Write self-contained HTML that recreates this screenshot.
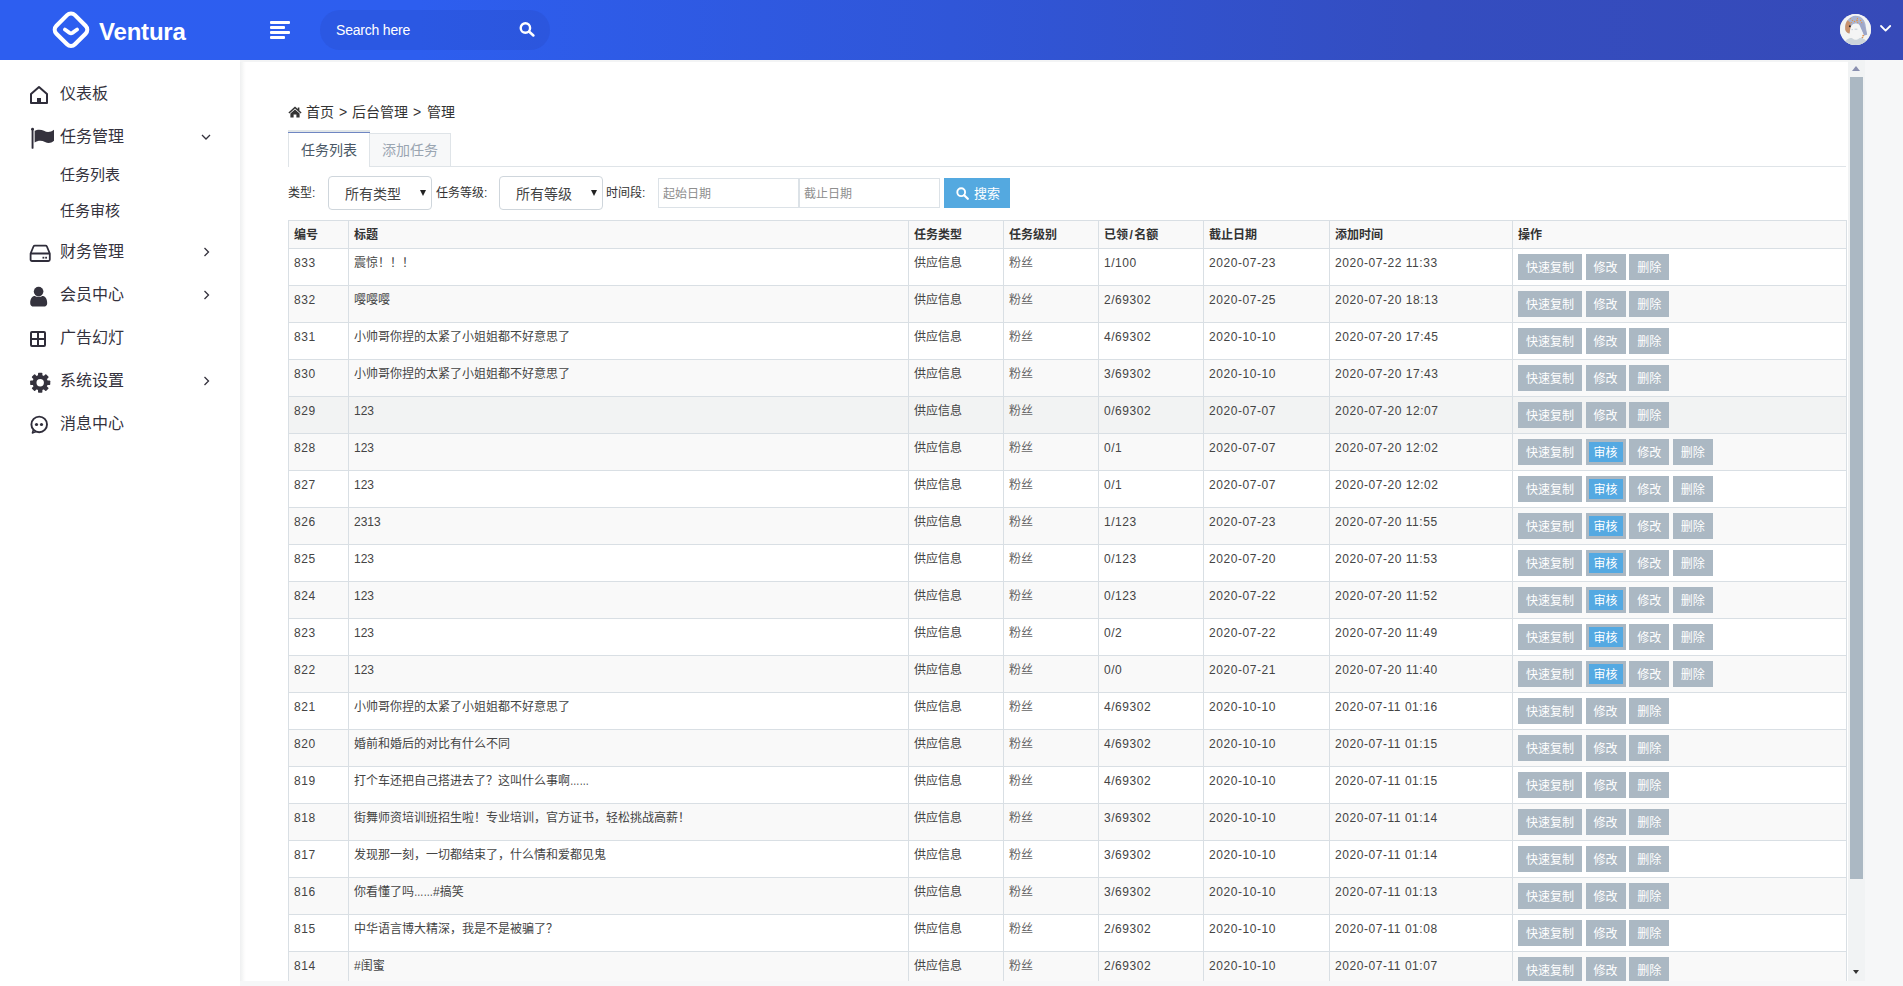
<!DOCTYPE html>
<html lang="zh-CN">
<head>
<meta charset="utf-8">
<title>Ventura</title>
<style>
*{box-sizing:border-box}
html,body{margin:0;padding:0}
body{width:1903px;height:986px;overflow:hidden;position:relative;background:#f6f7f8;
 font-family:"Liberation Sans","Noto Sans CJK SC",sans-serif;color:#333;}
a{text-decoration:none;color:inherit}
/* header */
#hd{position:absolute;left:0;top:0;width:1903px;height:60px;
 background:linear-gradient(90deg,#2d5ef0 0%,#2d5eef 22%,#3056d8 50%,#344dc0 75%,#364ab8 100%);}
#logo{position:absolute;left:50px;top:9px;width:42px;height:42px}
#brand{position:absolute;left:99px;top:17px;font-size:24px;font-weight:bold;color:#fff;line-height:30px;letter-spacing:-0.2px}
#burger{position:absolute;left:270px;top:21px;width:20px;height:18px}
#burger i{position:absolute;left:0;height:3px;background:#fff;border-radius:1px}
#search{position:absolute;left:320px;top:10px;width:230px;height:40px;border-radius:20px;background:rgba(40,60,170,.18)}
#search span{position:absolute;left:16px;top:11px;font-size:14px;line-height:18px;color:#fff;letter-spacing:-.2px}
#search svg{position:absolute;left:199px;top:12px}
#avatar{position:absolute;left:1840px;top:14px;width:31px;height:31px;border-radius:50%;overflow:hidden;background:#e6e8ea}
#uchev{position:absolute;left:1879px;top:24px}
/* sidebar */
#sb{position:absolute;left:0;top:60px;width:240px;height:926px;background:#fff}
.mi{position:absolute;left:0;width:240px;height:43px}
.mi .ic{position:absolute;left:28px;top:9px;width:28px;height:26px}
.mi .tx{position:absolute;left:60px;top:10px;font-size:16px;line-height:22px;color:#34323d}
.mi .ch{position:absolute;left:199px;top:14px;width:14px;height:14px}
.si{position:absolute;left:60px;font-size:15px;line-height:20px;color:#34323d}
/* frame */
#fr{position:absolute;left:240px;top:60px;width:1625px;height:921px;
 background:linear-gradient(90deg,#eff0f1 0,#f4f5f5 2px,#fbfbfb 4px,#fff 6px) #fff;border-top:2px solid #f3f4f5}
#sbar{position:absolute;left:1848px;top:60px;width:17px;height:921px;background:#f1f3f4}
#sbar .th{position:absolute;left:2px;top:17px;width:13px;height:802px;background:#abb8c3}
#sbar .up{position:absolute;left:4px;top:6px;width:0;height:0;border-left:4.5px solid transparent;border-right:4.5px solid transparent;border-bottom:5px solid #8a90b0}
#sbar .dn{position:absolute;left:5px;top:910px;width:0;height:0;border-left:3.5px solid transparent;border-right:3.5px solid transparent;border-top:4px solid #333}
/* content */
#bc{position:absolute;left:288px;top:101px;font-size:14px;line-height:22px;color:#333;white-space:nowrap}
#bc svg{position:absolute;left:0;top:5px}
#bc span{position:absolute;top:0}
#tabs{position:absolute;left:288px;top:130px;width:1558px;height:37px;border-bottom:1px solid #dfe4e8}
#t1{position:absolute;left:0;top:0;width:82px;height:37px;background:#fff;border-left:1px solid #dfe4e8;border-right:1px solid #dfe4e8;border-top:2px solid #e1e6e8;font-size:14px;color:#4a5866;text-align:center;line-height:36px}
#t1:before{content:"";position:absolute;left:-1px;right:-1px;top:0;height:1px;background:#6f86c2}
#t2{position:absolute;left:81px;top:3px;width:82px;height:34px;background:#f7f8f9;border:1px solid #dfe4e8;font-size:14px;color:#9aa5b1;text-align:center;line-height:32px}
.lb{position:absolute;top:184px;font-size:12px;line-height:18px;color:#333;white-space:nowrap}
.sel{position:absolute;top:176px;width:104px;height:34px;border:1px solid #cfd6dc;border-radius:4px;background:#fff;font-size:14px;line-height:34px;color:#444}
.sel span{position:absolute;left:16px;top:0}
.sel i{position:absolute;left:90.5px;top:13px;width:0;height:0;border-left:3px solid transparent;border-right:3px solid transparent;border-top:6px solid #222}
.inp{position:absolute;top:178px;height:30px;border:1px solid #dce2e7;background:#fff;font-size:12px;line-height:30px;color:#8e8e8e;padding-left:4px}
#sbtn{position:absolute;left:944px;top:178px;width:66px;height:30px;background:#54a9e0;color:#fff;font-size:12px;line-height:30px}
#sbtn svg{position:absolute;left:12px;top:9px}
#sbtn span{position:absolute;left:30px;top:1px;font-size:13px}
table{position:absolute;left:288px;top:220px;width:1558px;border-collapse:collapse;table-layout:fixed;font-size:12px;line-height:17px;color:#444}
th,td{border:1px solid #d9dfe4;padding:6px 5px 4px 5px;text-align:left;vertical-align:top;white-space:nowrap;overflow:hidden}
th{font-weight:bold;color:#333;background:#f9f9f9;height:28px}
td{height:37px}
tr.alt td{background:#f9f9f9}
tr.hov td{background:#f2f3f3}
td.n{letter-spacing:.55px}
td.lv{color:#666}
.ell{display:inline-block;width:19px;transform:scaleX(.79);transform-origin:0 50%;white-space:nowrap;vertical-align:top}
td.ops{padding:5px 0 0 5px}
.btn{display:inline-block;height:26px;line-height:28px;padding:0 8px;margin-right:3.6px;background:#abb8c3;color:#fff;font-size:12px;vertical-align:top}
.btn.audit{padding:0;width:40px}
.btn.audit span{display:block;margin:3px;height:20px;line-height:22px;background:#54a9e2;text-align:center}
</style>
</head>
<body>
<div id="hd">
 <svg id="logo" viewBox="0 0 42 42"><rect x="7.9" y="7.6" width="26.2" height="26.2" rx="5.6" transform="rotate(45 21 20.7)" fill="none" stroke="#fff" stroke-width="4.2"/><path d="M14.9 20.5 L19.6 23.9 Q21 24.8 22.4 23.9 L27.1 20.5" fill="none" stroke="#fff" stroke-width="3.8" stroke-linecap="round" stroke-linejoin="round"/></svg>
 <div id="brand">Ventura</div>
 <div id="burger"><i style="top:0;width:20px"></i><i style="top:5px;width:15px"></i><i style="top:10px;width:20px"></i><i style="top:15px;width:15px"></i></div>
 <div id="search"><span>Search here</span>
  <svg width="17" height="16" viewBox="0 0 17 16"><circle cx="6.4" cy="6" r="4.7" fill="none" stroke="#fff" stroke-width="2.4"/><path d="M10 9.6 L14.4 13.4" stroke="#fff" stroke-width="2.6" stroke-linecap="round"/></svg></div>
 <div id="avatar"><svg width="31" height="31" viewBox="0 0 31 31"><rect width="31" height="31" fill="#f3f4f4"/><path d="M5.4 15 C4.6 8 9.5 2 15.5 1.8 C21 1.8 24 5 25.4 10 L27 20.4 L24.4 21.4 L21.4 14 C20.4 10.4 18 9.2 15.6 9.4 C12.4 9.6 10.6 12 10.2 15 L9.6 19.6 C7 19 5.8 17.4 5.4 15Z" fill="#a9b4d0"/><path d="M19 9.4 L23.4 8 L27.2 20.4 L24.2 21.6 L20.6 13.6Z" fill="#9ea7c8"/><path d="M5.2 15.4 C4.8 11 6 7.6 7.6 6.2 L10.6 8.8 L10.8 12.8 L9.4 19.4 C7 18.8 5.6 17.4 5.2 15.4Z" fill="#cf8a55" opacity=".8"/><circle cx="9.9" cy="12.3" r="1" fill="#2a2630"/><g fill="#e0944f"><circle cx="10.5" cy="4.6" r=".7"/><circle cx="12.5" cy="6.4" r=".7"/><circle cx="11.5" cy="8.6" r=".7"/><circle cx="14.5" cy="7.5" r=".7"/><circle cx="17" cy="6.4" r=".9"/><circle cx="17.5" cy="4.4" r=".6"/><circle cx="17.6" cy="8.6" r=".7"/><circle cx="20.6" cy="6.5" r=".7"/><circle cx="21.6" cy="8.6" r=".7"/><circle cx="23.2" cy="21.6" r=".9"/><circle cx="22.6" cy="23.4" r=".7"/></g><circle cx="21.6" cy="24.4" r=".7" fill="#2a2630"/><ellipse cx="15.4" cy="17.4" rx="5.2" ry="7.6" fill="#f4f5f5"/><path d="M14.6 15.2 H17.4" stroke="#b9c3d0" stroke-width=".9"/><path d="M11.4 15.6 H13" stroke="#b9c3d0" stroke-width=".7"/><path d="M4 31 C5 25.4 9 23.6 12 24 C14 26.4 17.6 26.4 19.6 24 C23 23.6 26.6 25.4 27.6 31Z" fill="#ccd5db"/></svg></div>
 <svg id="uchev" width="14" height="10" viewBox="0 0 14 10"><path d="M2 2 L6.6 6.6 L11.2 2" fill="none" stroke="#fff" stroke-width="1.8" stroke-linecap="round" stroke-linejoin="round"/></svg>
</div>

<div id="sb">
 <div class="mi" style="top:13px"><svg class="ic" viewBox="0 0 28 26"><path d="M3 12 L11 5.1 L19 12 V21 H3 Z" fill="none" stroke="#2f2d3a" stroke-width="2" stroke-linejoin="round"/><rect x="9" y="16" width="4" height="5" fill="#2f2d3a"/></svg><span class="tx">仪表板</span></div>
 <div class="mi" style="top:56px"><svg class="ic" viewBox="0 0 28 26"><rect x="3.6" y="3.4" width="1.9" height="20.4" rx=".9" fill="#2f2d3a"/><circle cx="4.55" cy="4.2" r="1.4" fill="#2f2d3a"/><path d="M6.65 5.8 C9 4.4 13 4.2 16 5.8 C19 7.6 22.5 7.4 26 4.8 V15.8 C23 18.4 20 18.6 17 17 C13.5 15.2 9.5 15.6 6.65 17.6 Z" fill="#34323d"/></svg><span class="tx">任务管理</span><svg class="ch" viewBox="0 0 14 14"><path d="M3 5 L7 9 L11 5" fill="none" stroke="#34323d" stroke-width="1.3"/></svg></div>
 <a class="si" style="top:105px">任务列表</a>
 <a class="si" style="top:141px">任务审核</a>
 <div class="mi" style="top:171px"><svg class="ic" viewBox="0 0 28 26"><path d="M2.6 13.5 L5.5 6.5 Q5.9 5.6 6.9 5.6 H17.5 Q18.5 5.6 18.9 6.5 L21.8 13.5 V19.6 Q21.8 21 20.4 21 H4 Q2.6 21 2.6 19.6 Z M2.6 13.5 H21.8" fill="none" stroke="#2f2d3a" stroke-width="1.8" stroke-linejoin="round"/><rect x="14.5" y="16.8" width="1.8" height="1.8" fill="#2f2d3a"/><rect x="17.2" y="16.8" width="1.8" height="1.8" fill="#2f2d3a"/></svg><span class="tx">财务管理</span><svg class="ch" viewBox="0 0 14 14"><path d="M5.5 3 L9.5 7 L5.5 11" fill="none" stroke="#34323d" stroke-width="1.3"/></svg></div>
 <div class="mi" style="top:214px"><svg class="ic" style="top:10px" viewBox="0 0 28 26"><circle cx="10.6" cy="7.6" r="4.8" fill="#34323d"/><path d="M2.2 19.2 C2.2 13.8 5 12 7 12 C8.6 13.2 12.6 13.2 14.2 12 C16.4 12 19.2 13.8 19.2 19.2 C19.2 21.6 17.6 22.6 15.8 22.6 H5.6 C3.8 22.6 2.2 21.6 2.2 19.2Z" fill="#34323d"/></svg><span class="tx">会员中心</span><svg class="ch" viewBox="0 0 14 14"><path d="M5.5 3 L9.5 7 L5.5 11" fill="none" stroke="#34323d" stroke-width="1.3"/></svg></div>
 <div class="mi" style="top:257px"><svg class="ic" style="top:8px" viewBox="0 0 28 26"><rect x="3" y="7" width="14" height="14" rx="1" fill="none" stroke="#2f2d3a" stroke-width="2"/><path d="M10 7 V21 M3 14 H17" stroke="#2f2d3a" stroke-width="2"/></svg><span class="tx">广告幻灯</span></div>
 <div class="mi" style="top:300px"><svg class="ic" style="top:8.5px" viewBox="0 0 28 26"><g transform="translate(12.2 13.7) scale(.95)" fill="#34323d"><path fill-rule="evenodd" d="M0 -8 A8 8 0 1 0 0 8 A8 8 0 1 0 0 -8 Z M0 -3.9 A3.9 3.9 0 1 1 0 3.9 A3.9 3.9 0 1 1 0 -3.9Z"/><g id="tt"><rect x="-2.3" y="-10.6" width="4.6" height="4" rx=".8"/></g><use href="#tt" transform="rotate(45)"/><use href="#tt" transform="rotate(90)"/><use href="#tt" transform="rotate(135)"/><use href="#tt" transform="rotate(180)"/><use href="#tt" transform="rotate(225)"/><use href="#tt" transform="rotate(270)"/><use href="#tt" transform="rotate(315)"/></g></svg><span class="tx">系统设置</span><svg class="ch" viewBox="0 0 14 14"><path d="M5.5 3 L9.5 7 L5.5 11" fill="none" stroke="#34323d" stroke-width="1.3"/></svg></div>
 <div class="mi" style="top:343px"><svg class="ic" style="top:8.5px" viewBox="0 0 28 26"><circle cx="11.2" cy="12.4" r="7.8" fill="none" stroke="#2f2d3a" stroke-width="1.9"/><path d="M5.4 17.6 L4.4 21 L8 19.6" fill="none" stroke="#2f2d3a" stroke-width="1.5" stroke-linejoin="round"/><circle cx="8.5" cy="12.5" r="1.6" fill="#2f2d3a"/><circle cx="13.5" cy="12.5" r="1.6" fill="#2f2d3a"/></svg><span class="tx">消息中心</span></div>
</div>

<div id="fr"></div>
<div id="bc"><svg width="14" height="12" viewBox="0 0 14 12"><path d="M7 0.6 L0.4 6.4 L1.4 7.4 L7 2.6 L12.6 7.4 L13.6 6.4 L11.4 4.4 V1.4 H9.8 V3 Z" fill="#333"/><path d="M2.4 7.4 L7 3.6 L11.6 7.4 V11.6 H8.4 V8.4 H5.6 V11.6 H2.4 Z" fill="#333"/></svg><span style="left:18px">首页</span><span style="left:51px">&gt;</span><span style="left:64px">后台管理</span><span style="left:125px">&gt;</span><span style="left:139px">管理</span></div>
<div id="tabs"><a id="t1">任务列表</a><a id="t2">添加任务</a></div>
<span class="lb" style="left:288px">类型:</span>
<div class="sel" style="left:328px"><span>所有类型</span><i></i></div>
<span class="lb" style="left:436px">任务等级:</span>
<div class="sel" style="left:499px"><span>所有等级</span><i></i></div>
<span class="lb" style="left:606px">时间段:</span>
<div class="inp" style="left:658px;width:141px">起始日期</div>
<div class="inp" style="left:799px;width:141px">截止日期</div>
<a id="sbtn"><svg width="13" height="13" viewBox="0 0 13 13"><circle cx="5.2" cy="5.2" r="3.9" fill="none" stroke="#fff" stroke-width="1.9"/><path d="M8.2 8.2 L11.8 11.8" stroke="#fff" stroke-width="2.2" stroke-linecap="round"/></svg><span>搜索</span></a>
<table>
<colgroup><col style="width:60px"><col style="width:560px"><col style="width:95px"><col style="width:95px"><col style="width:105px"><col style="width:126px"><col style="width:183px"><col style="width:334px"></colgroup>
<thead><tr><th>编号</th><th>标题</th><th>任务类型</th><th>任务级别</th><th>已领<span style="margin:0 1.5px">/</span>名额</th><th>截止日期</th><th>添加时间</th><th>操作</th></tr></thead>
<tbody>
<tr class=""><td class="n">833</td><td>震惊！！！</td><td>供应信息</td><td class="lv">粉丝</td><td class="n">1/100</td><td class="n">2020-07-23</td><td class="n">2020-07-22 11:33</td><td class="ops"><a class="btn">快速复制</a><a class="btn">修改</a><a class="btn">删除</a></td></tr>
<tr class="alt"><td class="n">832</td><td>嘤嘤嘤</td><td>供应信息</td><td class="lv">粉丝</td><td class="n">2/69302</td><td class="n">2020-07-25</td><td class="n">2020-07-20 18:13</td><td class="ops"><a class="btn">快速复制</a><a class="btn">修改</a><a class="btn">删除</a></td></tr>
<tr class=""><td class="n">831</td><td>小帅哥你捏的太紧了小姐姐都不好意思了</td><td>供应信息</td><td class="lv">粉丝</td><td class="n">4/69302</td><td class="n">2020-10-10</td><td class="n">2020-07-20 17:45</td><td class="ops"><a class="btn">快速复制</a><a class="btn">修改</a><a class="btn">删除</a></td></tr>
<tr class="alt"><td class="n">830</td><td>小帅哥你捏的太紧了小姐姐都不好意思了</td><td>供应信息</td><td class="lv">粉丝</td><td class="n">3/69302</td><td class="n">2020-10-10</td><td class="n">2020-07-20 17:43</td><td class="ops"><a class="btn">快速复制</a><a class="btn">修改</a><a class="btn">删除</a></td></tr>
<tr class="hov"><td class="n">829</td><td>123</td><td>供应信息</td><td class="lv">粉丝</td><td class="n">0/69302</td><td class="n">2020-07-07</td><td class="n">2020-07-20 12:07</td><td class="ops"><a class="btn">快速复制</a><a class="btn">修改</a><a class="btn">删除</a></td></tr>
<tr class="alt"><td class="n">828</td><td>123</td><td>供应信息</td><td class="lv">粉丝</td><td class="n">0/1</td><td class="n">2020-07-07</td><td class="n">2020-07-20 12:02</td><td class="ops"><a class="btn">快速复制</a><a class="btn audit"><span>审核</span></a><a class="btn">修改</a><a class="btn">删除</a></td></tr>
<tr class=""><td class="n">827</td><td>123</td><td>供应信息</td><td class="lv">粉丝</td><td class="n">0/1</td><td class="n">2020-07-07</td><td class="n">2020-07-20 12:02</td><td class="ops"><a class="btn">快速复制</a><a class="btn audit"><span>审核</span></a><a class="btn">修改</a><a class="btn">删除</a></td></tr>
<tr class="alt"><td class="n">826</td><td>2313</td><td>供应信息</td><td class="lv">粉丝</td><td class="n">1/123</td><td class="n">2020-07-23</td><td class="n">2020-07-20 11:55</td><td class="ops"><a class="btn">快速复制</a><a class="btn audit"><span>审核</span></a><a class="btn">修改</a><a class="btn">删除</a></td></tr>
<tr class=""><td class="n">825</td><td>123</td><td>供应信息</td><td class="lv">粉丝</td><td class="n">0/123</td><td class="n">2020-07-20</td><td class="n">2020-07-20 11:53</td><td class="ops"><a class="btn">快速复制</a><a class="btn audit"><span>审核</span></a><a class="btn">修改</a><a class="btn">删除</a></td></tr>
<tr class="alt"><td class="n">824</td><td>123</td><td>供应信息</td><td class="lv">粉丝</td><td class="n">0/123</td><td class="n">2020-07-22</td><td class="n">2020-07-20 11:52</td><td class="ops"><a class="btn">快速复制</a><a class="btn audit"><span>审核</span></a><a class="btn">修改</a><a class="btn">删除</a></td></tr>
<tr class=""><td class="n">823</td><td>123</td><td>供应信息</td><td class="lv">粉丝</td><td class="n">0/2</td><td class="n">2020-07-22</td><td class="n">2020-07-20 11:49</td><td class="ops"><a class="btn">快速复制</a><a class="btn audit"><span>审核</span></a><a class="btn">修改</a><a class="btn">删除</a></td></tr>
<tr class="alt"><td class="n">822</td><td>123</td><td>供应信息</td><td class="lv">粉丝</td><td class="n">0/0</td><td class="n">2020-07-21</td><td class="n">2020-07-20 11:40</td><td class="ops"><a class="btn">快速复制</a><a class="btn audit"><span>审核</span></a><a class="btn">修改</a><a class="btn">删除</a></td></tr>
<tr class=""><td class="n">821</td><td>小帅哥你捏的太紧了小姐姐都不好意思了</td><td>供应信息</td><td class="lv">粉丝</td><td class="n">4/69302</td><td class="n">2020-10-10</td><td class="n">2020-07-11 01:16</td><td class="ops"><a class="btn">快速复制</a><a class="btn">修改</a><a class="btn">删除</a></td></tr>
<tr class="alt"><td class="n">820</td><td>婚前和婚后的对比有什么不同</td><td>供应信息</td><td class="lv">粉丝</td><td class="n">4/69302</td><td class="n">2020-10-10</td><td class="n">2020-07-11 01:15</td><td class="ops"><a class="btn">快速复制</a><a class="btn">修改</a><a class="btn">删除</a></td></tr>
<tr class=""><td class="n">819</td><td>打个车还把自己搭进去了？这叫什么事啊<span class="ell">……</span></td><td>供应信息</td><td class="lv">粉丝</td><td class="n">4/69302</td><td class="n">2020-10-10</td><td class="n">2020-07-11 01:15</td><td class="ops"><a class="btn">快速复制</a><a class="btn">修改</a><a class="btn">删除</a></td></tr>
<tr class="alt"><td class="n">818</td><td>街舞师资培训班招生啦！专业培训，官方证书，轻松挑战高薪！</td><td>供应信息</td><td class="lv">粉丝</td><td class="n">3/69302</td><td class="n">2020-10-10</td><td class="n">2020-07-11 01:14</td><td class="ops"><a class="btn">快速复制</a><a class="btn">修改</a><a class="btn">删除</a></td></tr>
<tr class=""><td class="n">817</td><td>发现那一刻，一切都结束了，什么情和爱都见鬼</td><td>供应信息</td><td class="lv">粉丝</td><td class="n">3/69302</td><td class="n">2020-10-10</td><td class="n">2020-07-11 01:14</td><td class="ops"><a class="btn">快速复制</a><a class="btn">修改</a><a class="btn">删除</a></td></tr>
<tr class="alt"><td class="n">816</td><td>你看懂了吗<span class="ell">……</span>#搞笑</td><td>供应信息</td><td class="lv">粉丝</td><td class="n">3/69302</td><td class="n">2020-10-10</td><td class="n">2020-07-11 01:13</td><td class="ops"><a class="btn">快速复制</a><a class="btn">修改</a><a class="btn">删除</a></td></tr>
<tr class=""><td class="n">815</td><td>中华语言博大精深，我是不是被骗了？</td><td>供应信息</td><td class="lv">粉丝</td><td class="n">2/69302</td><td class="n">2020-10-10</td><td class="n">2020-07-11 01:08</td><td class="ops"><a class="btn">快速复制</a><a class="btn">修改</a><a class="btn">删除</a></td></tr>
<tr class="alt"><td class="n">814</td><td>#闺蜜</td><td>供应信息</td><td class="lv">粉丝</td><td class="n">2/69302</td><td class="n">2020-10-10</td><td class="n">2020-07-11 01:07</td><td class="ops"><a class="btn">快速复制</a><a class="btn">修改</a><a class="btn">删除</a></td></tr>
</tbody>
</table>
<div id="sbar"><div class="up"></div><div class="th"></div><div class="dn"></div></div>
<div style="position:absolute;left:0;top:981px;width:1903px;height:5px;background:#f6f7f8"></div>
<div style="position:absolute;left:0;top:981px;width:240px;height:5px;background:#fff"></div>
</body>
</html>
